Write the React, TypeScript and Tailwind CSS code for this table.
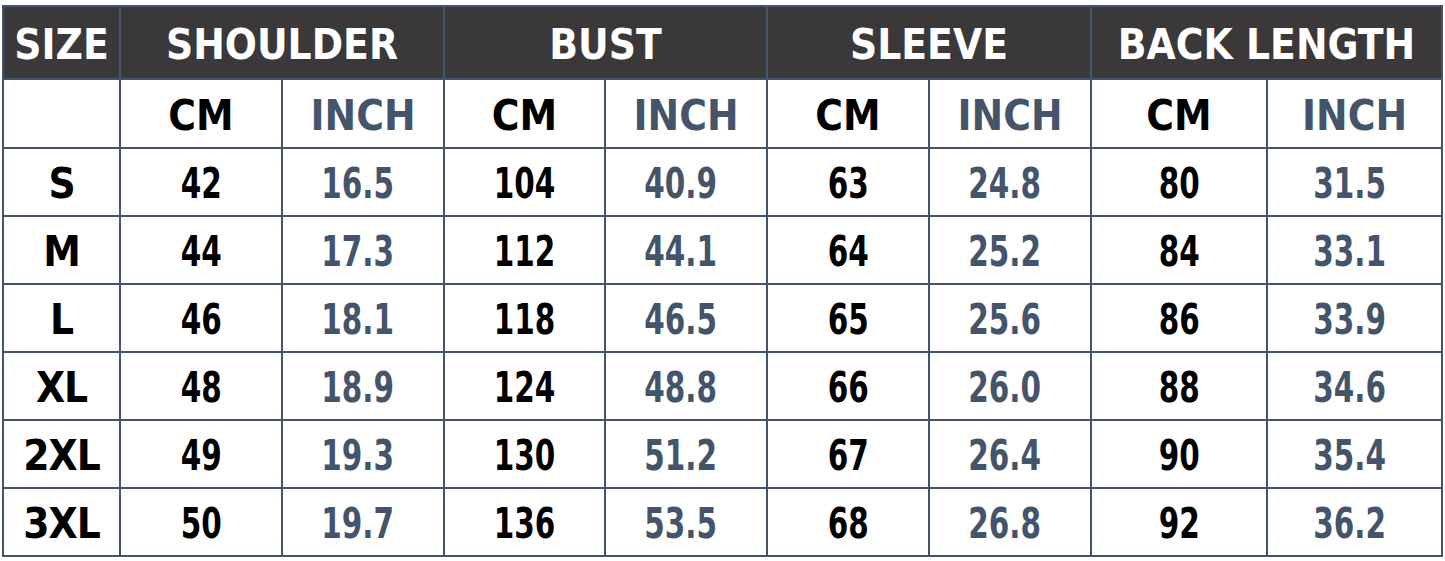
import React from "react";

const rows = [
  ["S", "42", "16.5", "104", "40.9", "63", "24.8", "80", "31.5"],
  ["M", "44", "17.3", "112", "44.1", "64", "25.2", "84", "33.1"],
  ["L", "46", "18.1", "118", "46.5", "65", "25.6", "86", "33.9"],
  ["XL", "48", "18.9", "124", "48.8", "66", "26.0", "88", "34.6"],
  ["2XL", "49", "19.3", "130", "51.2", "67", "26.4", "90", "35.4"],
  ["3XL", "50", "19.7", "136", "53.5", "68", "26.8", "92", "36.2"],
];

const widths = [117, 162, 162, 161, 162, 162, 162, 176, 175];

export default function App() {
  return (
    <div
      className="w-[1445px] h-[561px] bg-white pt-[5px] pl-[2px]"
      style={{ fontFamily: '"DejaVu Sans Condensed", "DejaVu Sans", sans-serif' }}
    >
      <table className="border-collapse table-fixed text-[42px] font-bold leading-none">
        <colgroup>
          {widths.map((w, i) => (
            <col key={i} style={{ width: w }} />
          ))}
        </colgroup>
        <thead>
          <tr className="h-[73px] bg-[#3a3838] text-white">
            <th className="border-2 border-[#44546a] text-center pt-[4px]">SIZE</th>
            <th colSpan={2} className="border-2 border-[#44546a] text-center pt-[4px]">SHOULDER</th>
            <th colSpan={2} className="border-2 border-[#44546a] text-center pt-[4px]">BUST</th>
            <th colSpan={2} className="border-2 border-[#44546a] text-center pt-[4px]">SLEEVE</th>
            <th colSpan={2} className="border-2 border-[#44546a] text-center pt-[4px]">BACK LENGTH</th>
          </tr>
          <tr className="h-[69px]">
            <th className="border-2 border-[#44546a]"></th>
            {[0, 1, 2, 3].map((i) => (
              <React.Fragment key={i}>
                <th className="border-2 border-[#44546a] text-black pt-[4px]">CM</th>
                <th className="border-2 border-[#44546a] text-[#44546a] font-semibold pt-[4px]">INCH</th>
              </React.Fragment>
            ))}
          </tr>
        </thead>
        <tbody>
          {rows.map((r) => (
            <tr key={r[0]} className="h-[68px]">
              {r.map((v, i) => (
                <td
                  key={i}
                  className={
                    i > 0 && i % 2 === 0
                      ? "border-2 border-[#44546a] text-center text-[#44546a] font-semibold pt-[4px] pr-[10px]"
                      : "border-2 border-[#44546a] text-center text-black pt-[4px]"
                  }
                >
                  {i === 0 ? (
                    <span className="inline-block tracking-[-1px]">{v}</span>
                  ) : (
                    <span className="inline-block scale-x-[0.78]">{v}</span>
                  )}
                </td>
              ))}
            </tr>
          ))}
        </tbody>
      </table>
    </div>
  );
}
